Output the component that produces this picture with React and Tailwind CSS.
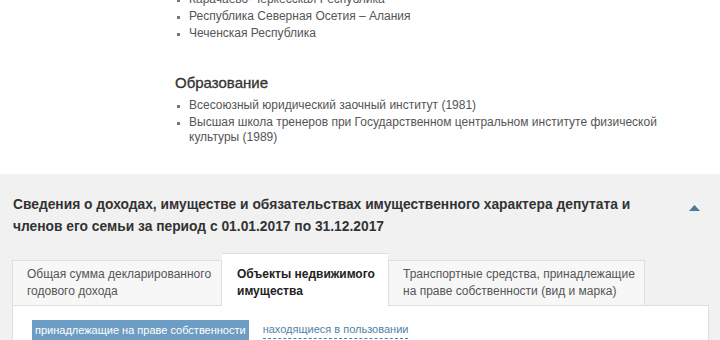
import React from 'react';

const regions = ['Карачаево-Черкесская Республика', 'Республика Северная Осетия – Алания', 'Чеченская Республика'];
const education = [
  'Всесоюзный юридический заочный институт (1981)',
  'Высшая школа тренеров при Государственном центральном институте физической культуры (1989)'
];

const BulletList = ({ items }) => (
  <ul className="space-y-[2px]">
    {items.map((item, index) => (
      <li key={index} className="flex text-[12px] leading-[15px] text-[#555]">
        <span className="w-[14px] shrink-0 flex pt-[7px] pl-[2px]">
          <span className="block w-[3px] h-[3px] bg-[#777]" />
        </span>
        <span>{item}</span>
      </li>
    ))}
  </ul>
);

const App = () => {
  return (
    <div className="w-[720px] h-[340px] overflow-hidden bg-white" style={{ fontFamily: '"Liberation Sans", Arial, sans-serif' }}>
      {/* Biography */}
      <div className="h-[174px] flex flex-col pl-[175px] pr-[40px]">
        <div className="mt-[-8px]">
          <BulletList items={regions} />
        </div>
        <h3 className="mt-[32px] text-[15px] leading-[20px] text-[#333] [-webkit-text-stroke:0.3px_#333]">Образование</h3>
        <div className="mt-[5px]">
          <BulletList items={education} />
        </div>
      </div>

      {/* Declarations */}
      <div className="bg-[#f1f1f1] h-[166px] pl-[12px] pr-[11px] pt-[20px]">
        <div className="flex justify-between">
          <h2 className="pl-[1px] max-w-[640px] text-[13.8px] leading-[22px] font-bold text-[#333]">
            Сведения о доходах, имуществе и обязательствах имущественного характера депутата и членов его семьи за период с 01.01.2017 по 31.12.2017
          </h2>
          <svg width="11" height="6" viewBox="0 0 11 6" className="mt-[11px] mr-[9px]">
            <path d="M5.5 0 L11 6 L0 6 Z" fill="#4b7a99" />
          </svg>
        </div>

        <div className="mt-[14px] flex items-end">
          <div className="w-[210px] h-[45px] whitespace-nowrap bg-[#f7f7f7] border border-b-0 border-[#dedede] px-[14px] pt-[5px] text-[12px] leading-[17px] text-[#555]">
            Общая сумма декларированного<br />годового дохода
          </div>
          <div className="w-[166px] h-[53px] whitespace-nowrap bg-white border-t border-[#dedede] px-[15px] pt-[12px] text-[12px] leading-[17px] font-bold text-[#222] relative top-[1px]">
            Объекты недвижимого<br />имущества
          </div>
          <div className="w-[257px] h-[45px] whitespace-nowrap bg-[#f7f7f7] border border-b-0 border-[#dedede] px-[14px] pt-[5px] text-[12px] leading-[17px] text-[#555]">
            Транспортные средства, принадлежащие<br />на праве собственности (вид и марка)
          </div>
        </div>

        <div className="bg-white border border-[#dedede] h-[60px] pl-[19px] pt-[14px] flex items-start gap-[14px]">
          <span className="bg-[#6d9dc3] text-white text-[11px] leading-[20px] px-[3px]">принадлежащие на праве собственности</span>
          <span className="text-[#4f82a8] text-[11px] leading-[17px] mt-[1px] border-b border-dashed border-[#4f82a8]">находящиеся в пользовании</span>
        </div>
      </div>
    </div>
  );
};

export default App;
